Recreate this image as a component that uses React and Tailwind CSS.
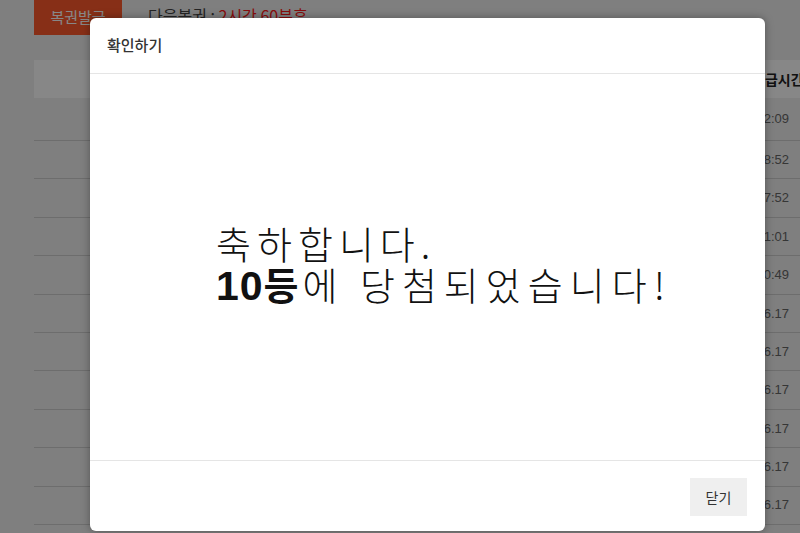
import React from "react";

const rows = [
  "10:12:09",
  "10:08:52",
  "09:57:52",
  "09:41:01",
  "09:30:49",
  "2021.06.17",
  "2021.06.17",
  "2021.06.17",
  "2021.06.17",
  "2021.06.17",
  "2021.06.17",
];

const font = { fontFamily: '"Noto Sans CJK KR", "Noto Sans", sans-serif' };

const PageBehind = () => (
  <div className="pl-[34px] w-[900px]" style={font}>
    <div className="flex items-center h-[35px]">
      <div className="w-[88px] h-[35px] bg-[#ff5a2c] text-white text-[15px] flex items-center justify-center">
        복권발급
      </div>
      <div className="ml-[26px] text-[16px] text-[#444] -mt-[6px]">
        다음복권 : <span className="text-[#ff1a1a]">2시간 60분후</span>
      </div>
    </div>

    <div className="mt-[25px] w-[866px]">
      <div className="h-[38px] bg-white flex items-center">
        <div className="w-[666px]" />
        <div className="pl-[52px] text-[14px] font-bold text-[#222] whitespace-nowrap">발급시간</div>
      </div>
      {rows.map((t, i) => (
        <div
          key={i}
          className={`flex items-center border-b border-[#cfcfcf] ${i === 0 ? "h-[43px]" : "h-[38.4px]"}`}
        >
          <div
            className="w-[755px] text-right text-[13px] text-[#666] whitespace-nowrap"
            style={{ fontFamily: '"Liberation Sans", sans-serif' }}
          >
            {t}
          </div>
        </div>
      ))}
    </div>
  </div>
);

export default function App() {
  return (
    <div className="relative w-[800px] h-[533px] overflow-hidden bg-[#f0f0f0]">
      <PageBehind />

      <div className="absolute inset-0 bg-black/47">
        <div
          className="ml-[90px] mt-[18px] w-[675px] h-[513px] bg-white rounded-[6px] shadow-[0_0_8px_rgba(0,0,0,0.35)] flex flex-col overflow-hidden"
          style={font}
        >
          <div className="h-[56px] border-b border-[#e5e5e5] flex items-center px-[17px] text-[15px] font-medium text-[#333]">
            확인하기
          </div>

          <div className="flex-1 flex items-center pl-[126px] pb-[6px]">
            <div className="text-[38px] leading-[41px] text-[#111] font-light whitespace-nowrap">
              <div className="tracking-[6px]">축하합니다.</div>
              <div className="tracking-[7px]">
                <span
                  className="font-bold text-[41px] tracking-[1px]"
                  style={{ fontFamily: '"Liberation Sans", "Noto Sans CJK KR", sans-serif' }}
                >
                  10
                </span>
                <span className="font-bold tracking-[4px]">등</span>에 당첨되었습니다!
              </div>
            </div>
          </div>

          <div className="h-[71px] border-t border-[#e5e5e5] flex items-start justify-end pt-[17px] pr-[18px]">
            <button
              type="button"
              className="w-[57px] h-[38px] bg-[#efefef] text-[14px] text-[#333]"
            >
              닫기
            </button>
          </div>
        </div>
      </div>
    </div>
  );
}
